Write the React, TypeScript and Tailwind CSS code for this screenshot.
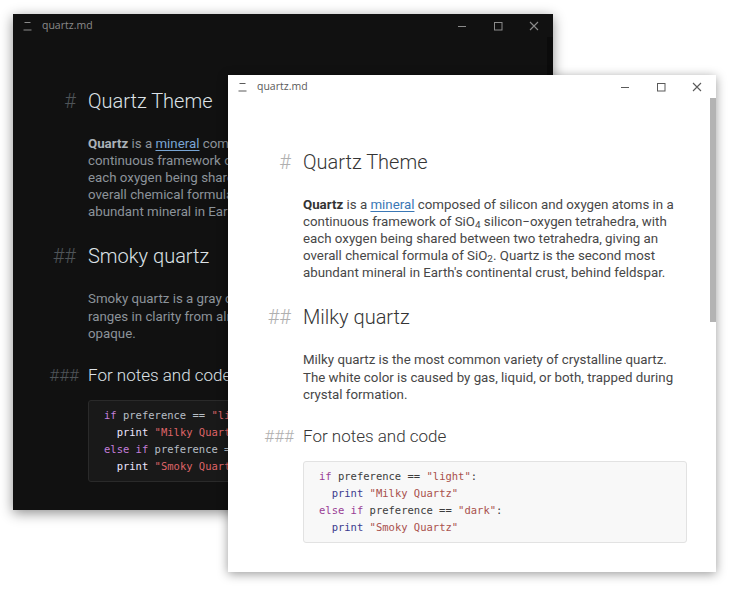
import React from "react";

type Theme = "dark" | "light";

const T = {
  dark: {
    win: "bg-[#111111] shadow-[0_3px_12px_rgba(0,0,0,0.45)]",
    chrome: "text-[#8b8b8b]",
    h: "text-[#dde2e7]",
    mark: "text-[#4f5458]",
    p: "text-[#8c939a]",
    strong: "text-[#aab1b8]",
    link: "text-[#79a5d4] decoration-[#79a5d4]",
    code: "bg-[#191919] border-[#2a2a2a]",
    kw: "text-[#c47ed9]",
    fn: "text-[#ece6ff]",
    str: "text-[#df6468]",
    plain: "text-[#b7bec5]",
    bar: "bg-[#0b0b0b]",
  },
  light: {
    win: "bg-white shadow-[0_2px_10px_rgba(0,0,0,0.4)]",
    chrome: "text-[#5a5a5a]",
    h: "text-[#353535]",
    mark: "text-[#b0b0b0]",
    p: "text-[#474747]",
    strong: "text-[#333333]",
    link: "text-[#3a77b5] decoration-[#3a77b5]",
    code: "bg-[#f8f8f8] border-[#e2e2e2]",
    kw: "text-[#9a3e95]",
    fn: "text-[#3b3b8e]",
    str: "text-[#a9504c]",
    plain: "text-[#3c3c3c]",
    bar: "bg-[#b3b3b3]",
  },
};

function TitleBar({ theme }: { theme: Theme }) {
  const t = T[theme];
  return (
    <div className={`flex items-center h-[23px] shrink-0 ${t.chrome}`}>
      <svg width="9" height="10" viewBox="0 0 9 10" className="ml-[10px]">
        <rect x="1.5" y="1" width="6" height="1" fill="currentColor" />
        <rect x="0.5" y="8.5" width="8" height="1" fill="currentColor" />
      </svg>
      <span className="ml-[10px] text-[10.5px] font-['Open_Sans',sans-serif]">quartz.md</span>
      <div className="ml-auto flex mr-[1px]">
        <div className="w-[36px] h-[23px] flex items-center justify-center">
          <svg width="10" height="10" viewBox="0 0 10 10">
            <rect x="1" y="5" width="8" height="1" fill="currentColor" />
          </svg>
        </div>
        <div className="w-[36px] h-[23px] flex items-center justify-center">
          <svg width="10" height="10" viewBox="0 0 10 10">
            <rect x="1.5" y="1.5" width="7.5" height="7.5" fill="none" stroke="currentColor" strokeWidth="1" />
          </svg>
        </div>
        <div className="w-[36px] h-[23px] flex items-center justify-center">
          <svg width="10" height="10" viewBox="0 0 10 10">
            <path d="M1 1 L9 9 M9 1 L1 9" stroke="currentColor" strokeWidth="1.1" />
          </svg>
        </div>
      </div>
    </div>
  );
}

function Heading({ theme, marker, size, children }: { theme: Theme; marker: string; size: "h1" | "h3"; children: React.ReactNode }) {
  const t = T[theme];
  const big = size === "h1";
  return (
    <div className={`flex items-center -ml-[60px] font-light ${big ? "text-[20px] h-[28px]" : "text-[17px] h-[24px]"}`}>
      <span className={`text-right ${big ? "w-[48px] mr-[12px]" : "w-[51px] mr-[9px]"} ${t.mark}`}>{marker}</span>
      <span className={t.h}>{children}</span>
    </div>
  );
}

function Doc({ theme }: { theme: Theme }) {
  const t = T[theme];
  const dark = theme === "dark";
  return (
    <div className="pl-[75px] w-[459px] font-['Roboto',sans-serif]">
      <div className="mt-[50px]">
        <Heading theme={theme} marker="#" size="h1">Quartz Theme</Heading>
      </div>
      <p className={`mt-[20px] text-[13.3px] leading-[17px] ${t.p}`}>
        <strong className={`font-bold ${t.strong}`}>Quartz</strong> is a{" "}
        <span className={`underline underline-offset-2 ${t.link}`}>mineral</span> composed of silicon and oxygen atoms in a
        continuous framework of SiO<sub>4</sub> silicon−oxygen tetrahedra, with each oxygen being shared between two
        tetrahedra, giving an overall chemical formula of SiO<sub>2</sub>. Quartz is the second most abundant mineral in
        Earth's continental crust, behind feldspar.
      </p>
      <div className="mt-[22px]">
        <Heading theme={theme} marker="##" size="h1">{dark ? "Smoky quartz" : "Milky quartz"}</Heading>
      </div>
      <p className={`mt-[20px] text-[13.3px] leading-[17.5px] ${t.p}`}>
        {dark
          ? "Smoky quartz is a gray color, translucent version of quartz. It ranges in clarity from almost complete transparency to nearly opaque."
          : "Milky quartz is the most common variety of crystalline quartz. The white color is caused by gas, liquid, or both, trapped during crystal formation."}
      </p>
      <div className="mt-[21px]">
        <Heading theme={theme} marker="###" size="h3">For notes and code</Heading>
      </div>
      <pre
        className={`mt-[12px] border rounded-[3px] pl-[15px] py-[6px] text-[10.5px] leading-[17px] font-['DejaVu_Sans_Mono',monospace] ${t.code} ${t.plain}`}
      >
        <span className={t.kw}>if</span> preference == <span className={t.str}>"light"</span>:{"\n"}
        {"  "}<span className={t.fn}>print</span> <span className={t.str}>"Milky Quartz"</span>{"\n"}
        <span className={t.kw}>else if</span> preference == <span className={t.str}>"dark"</span>:{"\n"}
        {"  "}<span className={t.fn}>print</span> <span className={t.str}>"Smoky Quartz"</span>
      </pre>
    </div>
  );
}

function Window({ theme, className }: { theme: Theme; className: string }) {
  const t = T[theme];
  return (
    <div className={`absolute flex flex-col overflow-hidden ${t.win} ${className}`}>
      <TitleBar theme={theme} />
      <div className="relative flex-1 flex">
        <Doc theme={theme} />
        <div className={`absolute right-0 top-0 w-[6px] h-[224px] ${t.bar}`} />
      </div>
    </div>
  );
}

export default function App() {
  return (
    <div className="relative w-[735px] h-[589px] bg-white overflow-hidden">
      <Window theme="dark" className="left-[13px] top-[14px] w-[540px] h-[496px]" />
      <Window theme="light" className="left-[228px] top-[75px] w-[488px] h-[497px]" />
    </div>
  );
}
